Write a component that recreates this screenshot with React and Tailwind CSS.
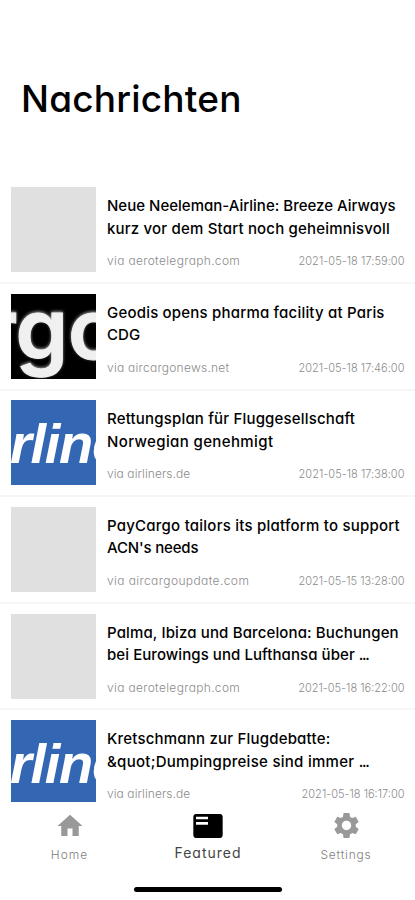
import React from "react";
import { MdHome, MdSettings, MdFeaturedPlayList } from "react-icons/md";

const articles = [
  {
    lines: [
      ["Neue Neeleman-Airline: Breeze Airways", "tracking-[0.01px]"],
      ["kurz vor dem Start noch geheimnisvoll", "tracking-[0.19px]"],
    ],
    source: ["via aerotelegraph.com", "tracking-[0.33px]"],
    date: ["2021-05-18 17:59:00", "tracking-[0.05px]"],
  },
  {
    lines: [
      ["Geodis opens pharma facility at Paris", "tracking-[0.2px]"],
      ["CDG", "tracking-[0.1px]"],
    ],
    source: ["via aircargonews.net", "tracking-[0.25px]"],
    date: ["2021-05-18 17:46:00", "tracking-[0.03px]"],
    image: "cargo",
  },
  {
    lines: [
      ["Rettungsplan für Fluggesellschaft", "tracking-[0.18px]"],
      ["Norwegian genehmigt", "tracking-[0.38px]"],
    ],
    source: ["via airliners.de", "tracking-[0.07px]"],
    date: ["2021-05-18 17:38:00", "tracking-[0.03px]"],
    image: "airliners",
  },
  {
    lines: [
      ["PayCargo tailors its platform to support", "tracking-[0.23px]"],
      ["ACN's needs", "tracking-[-0.16px]"],
    ],
    source: ["via aircargoupdate.com", "tracking-[0.4px]"],
    date: ["2021-05-15 13:28:00", "tracking-normal"],
  },
  {
    lines: [
      ["Palma, Ibiza und Barcelona: Buchungen", "tracking-[0.13px]"],
      ["bei Eurowings und Lufthansa über ", "tracking-[0.07px]", "..."],
    ],
    source: ["via aerotelegraph.com", "tracking-[0.33px]"],
    date: ["2021-05-18 16:22:00", "tracking-normal"],
  },
  {
    lines: [
      ["Kretschmann zur Flugdebatte:", "tracking-[0.2px]"],
      ["&quot;Dumpingpreise sind immer ", "tracking-[0.28px]", "..."],
    ],
    source: ["via airliners.de", "tracking-[0.07px]"],
    date: ["2021-05-18 16:17:00", "tracking-normal"],
    image: "airliners",
  },
];

const Thumbnail = ({ image }) => {
  if (image === "cargo") {
    return (
      <svg className="h-[85px] w-[85px] shrink-0 bg-black" viewBox="0 0 85 85">
        <text
          x="-27"
          y="65"
          fill="#f0f0f0"
          stroke="#f0f0f0"
          strokeWidth="1"
          fontFamily="Inter"
          fontSize="84"
          fontWeight="600"
          className="[filter:drop-shadow(0_-1px_1.5px_#999)]"
        >
          rgo
        </text>
      </svg>
    );
  }

  if (image === "airliners") {
    return (
      <svg className="h-[85px] w-[85px] shrink-0 bg-[#3467b3]" viewBox="0 0 85 85">
        <text
          x="-1"
          y="63"
          fill="#fff"
          fontFamily="Liberation Sans"
          fontSize="56"
          fontWeight="700"
          fontStyle="italic"
          letterSpacing="-1.3"
        >
          rline
        </text>
      </svg>
    );
  }

  return <div className="h-[85px] w-[85px] shrink-0 bg-[#e0e0e0]" />;
};

const Article = ({ article }) => {
  const [source, sourceTracking] = article.source;
  const [date, dateTracking] = article.date;

  return (
    <li className="flex h-[106.6px] shrink-0 gap-[11px] border-b-2 border-[#f6f6f6] pt-[9.7px] pr-[10.5px] pl-[11px]">
      <Thumbnail image={article.image} />
      <div className="flex-1 pt-[8px] whitespace-nowrap">
        <h2 className="text-[15px] leading-[22.5px] font-medium text-black">
          {article.lines.map(([text, tracking, dots]) => (
            <span key={text} className={`block whitespace-pre ${tracking}`}>
              {text}
              {dots && <span className="tracking-[-1.3px]">{dots}</span>}
            </span>
          ))}
        </h2>
        <div className="mt-[12px] flex justify-between leading-[18px] font-light text-[#8c8c8c]">
          <span className={`text-[12px] ${sourceTracking}`}>{source}</span>
          <span className={`text-[11px] ${dateTracking}`}>{date}</span>
        </div>
      </div>
    </li>
  );
};

export default function App() {
  return (
    <div className="flex h-[900px] w-[415px] flex-col overflow-hidden bg-white font-['Inter',sans-serif] [font-feature-settings:'cv11']">
      <header className="h-[177.5px] shrink-0 pt-[77px] pl-[21px]">
        <h1 className="text-[37px] leading-[44px] font-medium tracking-[0.2px] text-black">
          Nachrichten
        </h1>
      </header>

      <ul className="flex h-[624.3px] shrink-0 flex-col overflow-hidden">
        {articles.map((article) => (
          <Article key={article.date[0]} article={article} />
        ))}
      </ul>

      <nav className="grid h-[85px] shrink-0 grid-cols-[139px_138px_138px] text-[#999]">
        <div className="flex flex-col items-center pt-[9px]">
          <MdHome size={30} />
          <span className="mt-[5px] text-[12px] leading-[18px] font-light tracking-[1px] text-[#808080]">
            Home
          </span>
        </div>
        <div className="flex flex-col items-center pt-[8px]">
          <MdFeaturedPlayList size={32} className="text-black" />
          <span className="mt-px text-[14px] leading-[20px] tracking-[1px] text-[#444]">
            Featured
          </span>
        </div>
        <div className="flex flex-col items-center pt-[8px]">
          <MdSettings size={31} />
          <span className="mt-[5px] text-[12px] leading-[18px] font-light tracking-[0.8px] text-[#808080]">
            Settings
          </span>
        </div>
      </nav>

      <div className="ml-[134px] h-[5px] w-[148px] rounded-full bg-black" />
    </div>
  );
}
